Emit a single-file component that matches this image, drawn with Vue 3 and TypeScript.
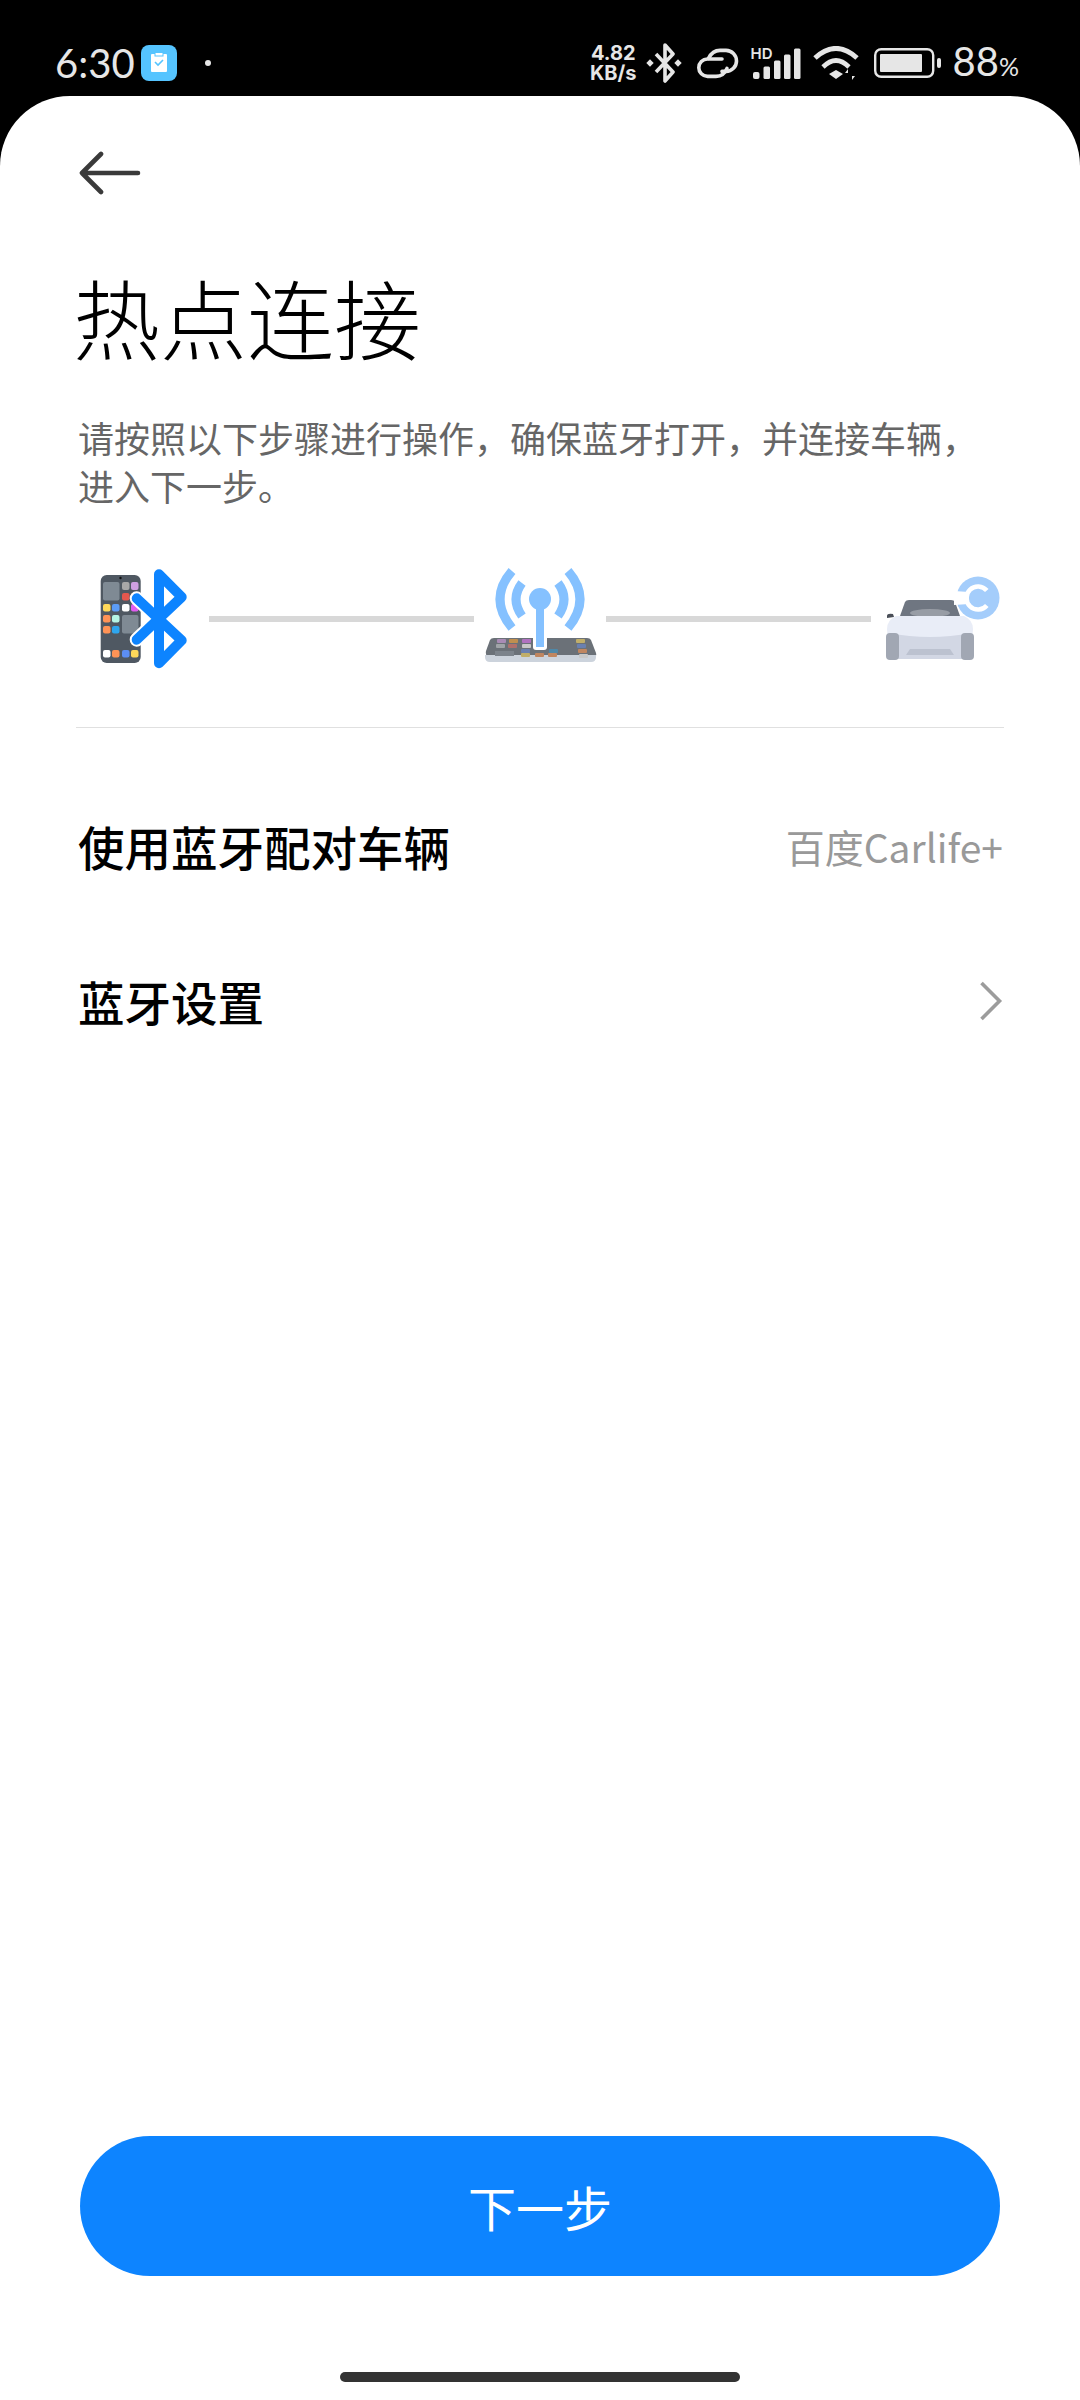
<script setup lang="ts">
interface Tile {
  x: number;
  y: number;
  w: number;
  h: number;
  c: string;
}

// app icons on the little phone, page coordinates
const phoneTiles: Tile[] = [
  { x: 103, y: 581, w: 16.5, h: 18.5, c: '#7f8a94' },
  { x: 122, y: 581, w: 7.5, h: 8, c: '#a8a8a8' },
  { x: 131, y: 581, w: 7.5, h: 8, c: '#cfa0e2' },
  { x: 122, y: 592, w: 7.5, h: 7.5, c: '#e4574e' },
  { x: 131, y: 592, w: 7.5, h: 7.5, c: '#e8912a' },
  { x: 103, y: 603, w: 7.5, h: 7.5, c: '#ffd95a' },
  { x: 112, y: 603, w: 7.5, h: 7.5, c: '#5c9cf5' },
  { x: 122, y: 603, w: 7.5, h: 7.5, c: '#ffffff' },
  { x: 131, y: 603, w: 7.5, h: 7.5, c: '#e15cf0' },
  { x: 103, y: 614, w: 7.5, h: 7.5, c: '#ff9356' },
  { x: 112, y: 614, w: 7.5, h: 7.5, c: '#b5f5e5' },
  { x: 122, y: 614, w: 16.5, h: 18.5, c: '#7f8a94' },
  { x: 103, y: 625, w: 7.5, h: 7.5, c: '#ff9356' },
  { x: 112, y: 625, w: 7.5, h: 7.5, c: '#2ea6ee' },
  { x: 103, y: 649, w: 7.5, h: 7.5, c: '#ffffff' },
  { x: 112, y: 649, w: 7.5, h: 7.5, c: '#ff9356' },
  { x: 122, y: 649, w: 7.5, h: 7.5, c: '#5c8ef5' },
  { x: 131, y: 649, w: 7.5, h: 7.5, c: '#ffd95a' },
];

const tabletTiles: Tile[] = [
  { x: 497, y: 638, w: 9, h: 4, c: '#a98bb5' },
  { x: 509, y: 638, w: 9, h: 4, c: '#c08f4f' },
  { x: 522, y: 638, w: 9, h: 4, c: '#b072c0' },
  { x: 496, y: 643, w: 9, h: 4, c: '#a0a4a8' },
  { x: 508, y: 643, w: 9, h: 4, c: '#b0706c' },
  { x: 522, y: 643, w: 9, h: 4, c: '#c8c8c8' },
  { x: 521, y: 648, w: 9, h: 4, c: '#6a80b0' },
  { x: 521, y: 652, w: 9, h: 4, c: '#c0ae6a' },
  { x: 535, y: 652, w: 9, h: 4, c: '#c08660' },
  { x: 548, y: 652, w: 9, h: 4, c: '#c08660' },
  { x: 549, y: 648, w: 9, h: 4, c: '#4e88a8' },
  { x: 576, y: 638, w: 9, h: 4, c: '#c0ae6a' },
  { x: 577, y: 643, w: 9, h: 4, c: '#6a80b0' },
  { x: 578, y: 648, w: 9, h: 4, c: '#c08660' },
  { x: 579, y: 653, w: 9, h: 4, c: '#c8c8c8' },
];
</script>

<template>
  <div class="page">
    <header class="status">
      <div class="status-left">
        <span class="time">6:30</span>
        <svg class="note" viewBox="0 0 36 36" width="36" height="36">
          <rect width="36" height="36" rx="8" fill="#55c4ff" />
          <rect x="10" y="9" width="16" height="18" rx="1" fill="#fff" />
          <rect x="14" y="7.5" width="8" height="3.5" fill="#fff" stroke="#55c4ff" stroke-width="1" />
          <path d="M14 17l3 3 5-5" fill="none" stroke="#55c4ff" stroke-width="1.6" />
        </svg>
        <span class="dot"></span>
      </div>
      <div class="status-right">
        <span class="speed"><span>4.82</span><span>KB/s</span></span>
        <svg class="bt" viewBox="0 0 36 40" width="36" height="40">
          <path d="M10 11l17 18-8 9V2l8 9-17 18" fill="none" stroke="#e6e6e6" stroke-width="3.6" stroke-linejoin="round" />
          <rect x="-2.6" y="-2.6" width="5.2" height="5.2" fill="#e6e6e6" transform="translate(4 20) rotate(45)" />
          <rect x="-2.6" y="-2.6" width="5.2" height="5.2" fill="#e6e6e6" transform="translate(32 20) rotate(45)" />
        </svg>
        <svg class="link" viewBox="0 0 42 31" width="42" height="31">
          <path d="M25 11H10.5a8.6 8.6 0 0 0 0 17.4H19c5 0 9-3 11-8" fill="none" stroke="#e6e6e6" stroke-width="3.6" stroke-linecap="round" />
          <path d="M25 23.4h4a10.5 10.5 0 0 0 0-21h-6c-5 0-9 3-11.5 8" fill="none" stroke="#e6e6e6" stroke-width="3.6" stroke-linecap="round" />
        </svg>
        <div class="signal">
          <span class="hd">HD</span>
          <svg viewBox="0 0 52 32" width="52" height="32">
            <rect x="4" y="25" width="6.5" height="7" rx="2" fill="#e6e6e6" />
            <rect x="14.5" y="19.5" width="6.5" height="12.5" rx="1.5" fill="#e6e6e6" />
            <rect x="25" y="13.5" width="6.5" height="18.5" rx="1.5" fill="#e6e6e6" />
            <rect x="35" y="7.5" width="6.5" height="24.5" rx="1.5" fill="#e6e6e6" />
            <rect x="45" y="1.5" width="6.5" height="30.5" rx="1.5" fill="#e6e6e6" />
          </svg>
        </div>
        <svg class="wifi" viewBox="0 0 46 35" width="46" height="35">
          <path d="M2 12Q23-7 44 12" fill="none" stroke="#e6e6e6" stroke-width="5" />
          <path d="M10 21Q23 8 36 21" fill="none" stroke="#e6e6e6" stroke-width="4.6" />
          <path d="M16 28l7-4 7 4-7 5z" fill="#e6e6e6" />
          <path d="M35 34v-7h-3l3-4zM39 23v7h3l-3 4z" fill="#e6e6e6" />
        </svg>
        <svg class="battery" viewBox="0 0 67 30" width="67" height="30">
          <rect x="1.2" y="1.2" width="58" height="27.6" rx="6" fill="none" stroke="#e6e6e6" stroke-width="2.4" />
          <rect x="6" y="6" width="42" height="18" rx="1" fill="#e6e6e6" />
          <rect x="63" y="10" width="4" height="10" rx="2" fill="#e6e6e6" />
        </svg>
        <span class="battery-num">88<small>%</small></span>
      </div>
    </header>

    <main class="sheet">
      <button class="back">
        <svg viewBox="0 0 62 44" width="62" height="44">
          <path d="M3 22h56M22 3L3 22l19 19" fill="none" stroke="#3a3a3a" stroke-width="4.6" stroke-linecap="round" stroke-linejoin="round" />
        </svg>
      </button>

      <h1 class="title">热点连接</h1>
      <p class="desc">请按照以下步骤进行操作，确保蓝牙打开，并连接车辆，<br />进入下一步。</p>

      <div class="steps">
        <svg class="step-phone" viewBox="96 560 94 112" width="94" height="112">
          <rect x="100.7" y="574" width="40" height="88" rx="6" fill="#4f5862" />
          <circle cx="120.5" cy="577" r="1.2" fill="#111" />
          <rect v-for="(t, i) in phoneTiles" :key="i" :x="t.x" :y="t.y" :width="t.w" :height="t.h" rx="2" :fill="t.c" />
          <path d="M136.7 597.3L181.7 639.3L159 662.3V573.3L181.7 596L136.7 638.7" fill="none" stroke="#fff" stroke-width="14" stroke-linejoin="round" stroke-linecap="round" />
          <path d="M136.7 597.3L181.7 639.3L159 662.3V573.3L181.7 596L136.7 638.7" fill="none" stroke="#0d84ff" stroke-width="10" stroke-linejoin="round" stroke-linecap="round" />
        </svg>
        <span class="step-line first"></span>
        <svg class="step-tower" viewBox="484 560 113 104" width="113" height="104">
          <path d="M486 650l4-11q1-2 4-2h93q3 0 4 2l5 13q1 4-3 4H490q-5 0-4-6z" fill="#6b7178" />
          <path d="M485 654h111v2q0 5-5 5H490q-5 0-5-5z" fill="#ccd3dc" />
          <rect x="495" y="650" width="19" height="5" fill="#7c838b" />
          <rect v-for="(t, i) in tabletTiles" :key="i" :x="t.x" :y="t.y" :width="t.w" :height="t.h" rx="1" :fill="t.c" />
          <rect x="533" y="600" width="14" height="49" rx="3" fill="#fff" />
          <rect x="536" y="600" width="8" height="46" fill="#85c1ff" />
          <circle cx="540" cy="598" r="11" fill="#85c1ff" />
          <path d="M522 582q-12 16 0 33M558 582q12 16 0 33" fill="none" stroke="#85c1ff" stroke-width="9" />
          <path d="M512 570q-24 28 0 57M568 570q24 28 0 57" fill="none" stroke="#85c1ff" stroke-width="9" />
        </svg>
        <span class="step-line second"></span>
        <svg class="step-car" viewBox="885 565 117 104" width="117" height="104">
          <path d="M900 615l5-14q1-2 4-2h42q3 0 4 2l5 14z" fill="#6f7681" />
          <ellipse cx="930" cy="612" rx="20" ry="4" fill="#989da5" />
          <path d="M887 615q0-3 6-2l1 3-7 1z" fill="#4a4f58" />
          <path d="M887 628q0-9 9-13h68q9 4 9 13l-2 26H889z" fill="#e9edf7" />
          <path d="M889 632q41 8 82 0l-1 26H890z" fill="#d2d7e4" />
          <path d="M906 654l4-6h40l4 6z" fill="#bcc2d0" />
          <rect x="886" y="632" width="13" height="27" rx="4" fill="#a1a7b3" />
          <rect x="961" y="632" width="13" height="27" rx="4" fill="#a1a7b3" />
          <circle cx="978" cy="597" r="21.5" fill="#a4cdfb" />
          <path d="M986.8 589.6a11.5 11.5 0 1 0 0 14.8" fill="none" stroke="#fff" stroke-width="4.6" />
          <path d="M954 590l15 1v12l-15 1z" fill="#fff" />
        </svg>
      </div>

      <div class="divider"></div>

      <div class="row first-row">
        <span class="row-label">使用蓝牙配对车辆</span>
        <span class="row-value">百度Carlife+</span>
      </div>
      <div class="row">
        <span class="row-label">蓝牙设置</span>
        <svg viewBox="0 0 24 40" width="24" height="40">
          <path d="M2.5 2l18 18-18 18" fill="none" stroke="#9c9c9c" stroke-width="3.6" />
        </svg>
      </div>

      <div class="footer">
        <button class="next">下一步</button>
        <div class="home-bar"></div>
      </div>
    </main>
  </div>
</template>

<style>
html,
body {
  background: #000;
}
</style>

<style scoped>
.page {
  width: 1080px;
  height: 2400px;
  display: flex;
  flex-direction: column;
  font-family: "Noto Sans CJK SC", "Noto Sans", sans-serif;
  background: #000;
  overflow: hidden;
}

.status {
  height: 96px;
  flex: none;
  display: flex;
  justify-content: space-between;
  align-items: flex-start;
  padding: 43px 61px 0 55px;
  box-sizing: border-box;
  color: #e6e6e6;
}

.status-left,
.status-right {
  display: flex;
  align-items: center;
  height: 40px;
}

.time {
  font-family: Lato, sans-serif;
  font-size: 40px;
  line-height: 40px;
  width: 86px;
}

.dot {
  width: 6px;
  height: 6px;
  border-radius: 50%;
  background: #e6e6e6;
  margin-left: 28px;
}

.speed {
  display: flex;
  flex-direction: column;
  align-items: center;
  font-family: Inter, sans-serif;
  font-weight: 700;
  font-size: 20px;
  line-height: 20px;
  margin-right: 9px;
}

.link {
  margin-left: 15px;
}

.signal {
  position: relative;
  width: 52px;
  height: 32px;
  margin-left: 10px;
}

.signal svg {
  display: block;
}

.hd {
  position: absolute;
  left: 2px;
  top: -1px;
  font-family: Inter, sans-serif;
  font-weight: 600;
  font-size: 15px;
  line-height: 15px;
}

.wifi {
  margin-left: 12px;
}

.battery {
  margin-left: 15px;
}

.battery-num {
  font-family: Lato, sans-serif;
  font-size: 40px;
  line-height: 40px;
  margin-left: 12px;
}

.battery-num small {
  font-size: 25px;
}

.sheet {
  flex: 1;
  display: flex;
  flex-direction: column;
  background: #fff;
  border-radius: 70px 70px 0 0;
  padding: 0 76px;
}

.back {
  align-self: flex-start;
  padding: 0;
  margin: 55px 0 0 3px;
  border: none;
  background: none;
  height: 44px;
}

.title {
  margin: 66px 0 0 -3px;
  font-size: 87px;
  line-height: 110px;
  font-weight: 300;
  color: #000;
}

.desc {
  margin: 42px 0 0 2px;
  font-size: 36px;
  line-height: 48px;
  color: #666;
  white-space: nowrap;
}

.steps {
  display: flex;
  align-items: flex-start;
  margin: 52px 0 0 20px;
  height: 112px;
}

.step-line {
  width: 265px;
  height: 6px;
  background: #d8d8d8;
  margin-top: 55px;
}

.step-line.first {
  margin-left: 19px;
  margin-right: 10px;
}

.step-line.second {
  margin-left: 9px;
  margin-right: 14px;
}

.step-car {
  margin-top: 5px;
}

.divider {
  height: 1px;
  background: #e0e0e0;
  margin-top: 54px;
  width: 928px;
}

.row {
  display: flex;
  justify-content: space-between;
  align-items: center;
  height: 155px;
  margin-left: 2px;
  margin-right: 1px;
}

.first-row {
  margin-top: 40px;
}

.row-label {
  font-size: 46.5px;
  font-weight: 500;
  color: #000;
}

.row-value {
  font-size: 39px;
  color: #999;
}

.footer {
  margin-top: auto;
  display: flex;
  flex-direction: column;
  align-items: center;
  padding-bottom: 18px;
}

.next {
  width: 920px;
  height: 140px;
  border: none;
  border-radius: 70px;
  background: #0d84ff;
  color: #fff;
  font-family: inherit;
  font-size: 48px;
}

.home-bar {
  width: 400px;
  height: 10px;
  border-radius: 5px;
  background: #333;
  margin-top: 96px;
}
</style>
